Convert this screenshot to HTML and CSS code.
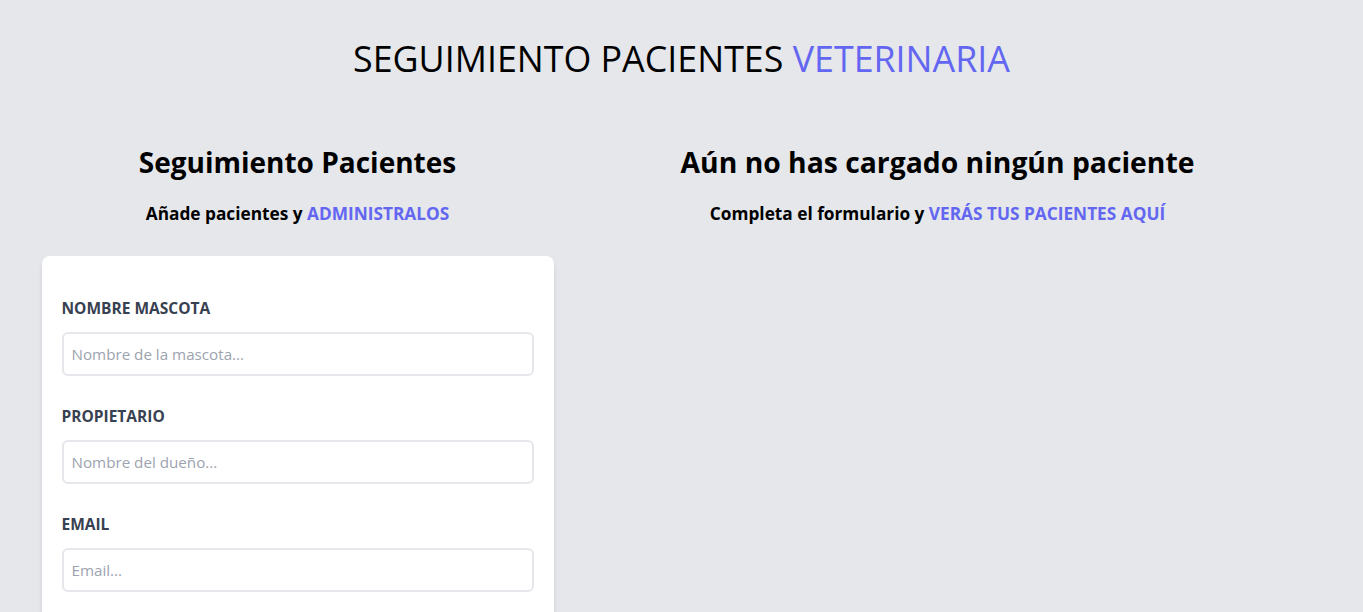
FILE: index.html
```html
<!DOCTYPE html>
<html lang="es">
<head>
<meta charset="utf-8">
<title>Seguimiento Pacientes Veterinaria</title>
<link rel="stylesheet" href="styles.css">
</head>
<body>
<div class="container">
  <h1 class="title">SEGUIMIENTO PACIENTES <span class="accent">VETERINARIA</span></h1>
  <div class="columns">
    <section class="col-form">
      <h2 class="heading">Seguimiento Pacientes</h2>
      <p class="subtitle">Añade pacientes y <span class="accent">ADMINISTRALOS</span></p>
      <form class="form">
        <div class="field">
          <label class="label" for="mascota">NOMBRE MASCOTA</label>
          <input class="input" id="mascota" type="text" placeholder="Nombre de la mascota...">
        </div>
        <div class="field">
          <label class="label" for="propietario">PROPIETARIO</label>
          <input class="input" id="propietario" type="text" placeholder="Nombre del dueño...">
        </div>
        <div class="field">
          <label class="label" for="email">EMAIL</label>
          <input class="input" id="email" type="email" placeholder="Email...">
        </div>
      </form>
    </section>
    <section class="col-list">
      <h2 class="heading">Aún no has cargado ningún paciente</h2>
      <p class="subtitle">Completa el formulario y <span class="accent">VERÁS TUS PACIENTES AQUÍ</span></p>
    </section>
  </div>
</div>
</body>
</html>
```

FILE: styles.css
```css
* { box-sizing: border-box; }
html, body { margin: 0; padding: 0; }
body {
  background: #e5e7eb;
  font-family: "Open Sans", "Noto Sans", sans-serif;
  color: #000;
}
.container {
  width: 1280px;
  margin: 0 auto;
  padding-top: 36px;
}
.title {
  margin: 0;
  font-size: 35.8px;
  line-height: 44px;
  font-weight: 500;
  text-align: center;
}
.accent { color: #6366f1; }
.columns {
  display: flex;
  margin-top: 64px;
}
.col-form { width: 40%; }
.col-list { width: 60%; }
.heading {
  margin: 0;
  font-size: 28px;
  line-height: 36px;
  font-weight: 700;
  text-align: center;
}
.col-list .heading { font-size: 28.3px; }
.subtitle {
  margin: 20px 0 28px;
  font-size: 17.25px;
  line-height: 28px;
  font-weight: 700;
  text-align: center;
}
.form {
  background: #fff;
  border-radius: 8px;
  box-shadow: 0 4px 6px -1px rgba(0,0,0,0.1), 0 2px 4px -2px rgba(0,0,0,0.1);
  padding: 40px 20px 40px;
  margin-bottom: 40px;
}
.field { margin-bottom: 28px; }
.label {
  display: block;
  font-size: 15.5px;
  line-height: 24px;
  font-weight: 700;
  color: #374151;
}
.input {
  display: block;
  width: 100%;
  margin-top: 12px;
  height: 44px;
  padding: 8px;
  border: 2px solid #e5e7eb;
  border-radius: 6px;
  font-family: inherit;
  font-size: 15.2px;
  color: #111827;
  background: #fff;
  outline: none;
}
.input::placeholder { color: #9ca3af; }
```
